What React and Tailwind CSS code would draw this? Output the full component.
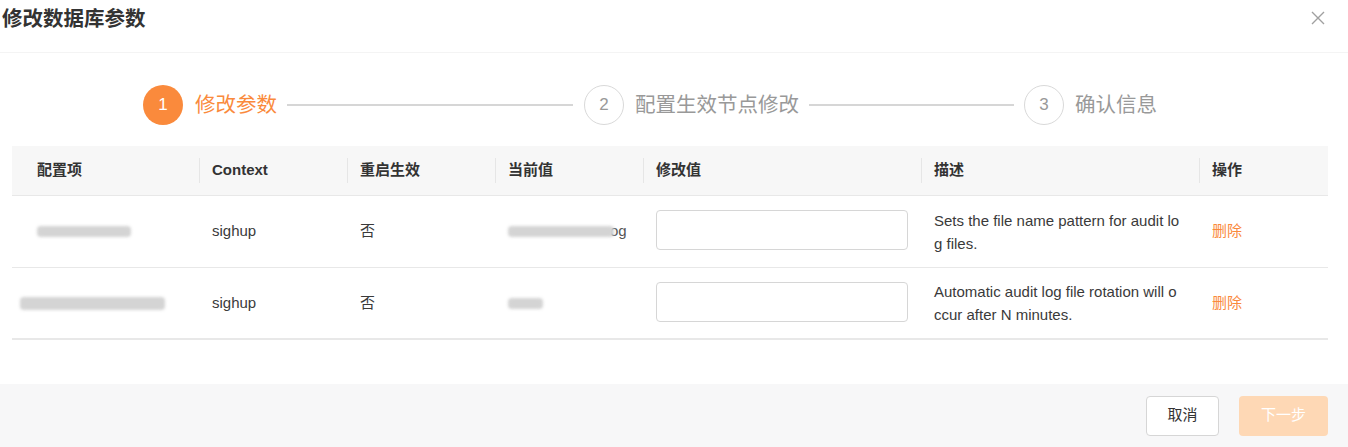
import React from "react";

const FONT = { fontFamily: '"Liberation Sans", "Noto Sans CJK SC", sans-serif' };

function Blur({ w, className = "" }) {
  return <div className={"h-[11px] bg-[#d4d4d4] blur-[1.5px] rounded-sm " + className} style={{ width: w }} />;
}

const rows = [
  {
    name: <div className="flex items-center"><Blur w={94} /></div>,
    cur: (
      <div className="flex items-center">
        <Blur w={106} />
        <span className="text-[15px] text-[#555] ml-[-4px]">og</span>
      </div>
    ),
    desc: "Sets the file name pattern for audit log files.",
  },
  {
    name: <div className="flex items-center ml-[-17px]"><Blur w={145} className="h-[13px]" /></div>,
    cur: <Blur w={35} />,
    desc: "Automatic audit log file rotation will occur after N minutes.",
  },
];

const cols = [
  { w: "w-[187px]", pl: "pl-[25px]" },
  { w: "w-[148px]", pl: "pl-[13px]" },
  { w: "w-[148px]", pl: "pl-[13px]" },
  { w: "w-[148px]", pl: "pl-[13px]" },
  { w: "w-[278px]", pl: "pl-[13px]" },
  { w: "w-[278px]", pl: "pl-[13px]" },
  { w: "w-[129px]", pl: "pl-[13px]" },
];

export default function App() {
  const heads = ["配置项", "Context", "重启生效", "当前值", "修改值", "描述", "操作"];
  return (
    <div className="w-[1348px] h-[447px] bg-white text-[#333] flex flex-col" style={FONT}>
      {/* header */}
      <div className="h-[53px] flex items-start justify-between border-b border-[#f4f4f4] shrink-0">
        <div className="pl-[2px] pt-[5px] text-[20.5px] font-bold text-[#333] leading-[28px]">修改数据库参数</div>
        <svg className="mt-[11px] mr-[23px]" width="14" height="14" viewBox="0 0 14 14">
          <path d="M1 1L13 13M13 1L1 13" stroke="#a0a0a0" strokeWidth="1.4" />
        </svg>
      </div>

      {/* steps */}
      <div className="h-[93px] shrink-0 flex items-start pt-[32px] pl-[143px]">
        <div className="w-[40px] h-[40px] rounded-full bg-[#fa8a3c] text-white flex items-center justify-center text-[17px]">1</div>
        <div className="ml-[12px] text-[20.5px] leading-[40px] text-[#fa8a3c]">修改参数</div>
        <div className="ml-[10px] mt-[19px] w-[286px] h-[2px] bg-[#d6d6d6]" />
        <div className="ml-[11px] w-[40px] h-[40px] rounded-full border border-[#d9d9d9] text-[#999] flex items-center justify-center text-[17px]">2</div>
        <div className="ml-[11px] text-[20.5px] leading-[40px] text-[#999]">配置生效节点修改</div>
        <div className="ml-[10px] mt-[19px] w-[205px] h-[2px] bg-[#d6d6d6]" />
        <div className="ml-[10px] w-[40px] h-[40px] rounded-full border border-[#d9d9d9] text-[#999] flex items-center justify-center text-[17px]">3</div>
        <div className="ml-[11px] text-[20.5px] leading-[40px] text-[#999]">确认信息</div>
      </div>

      {/* table */}
      <div className="ml-[12px] w-[1316px] shrink-0">
        <div className="flex h-[50px] bg-[#f7f7f7] border-b border-[#e8e8e8]">
          {heads.map((h, i) => (
            <div key={h} className={`${cols[i].w} ${cols[i].pl} flex items-center relative text-[15px] font-bold text-[#333]`}>
              {i > 0 && <div className="absolute left-0 top-[12px] h-[25px] w-px bg-[#e6e6e6]" />}
              {h}
            </div>
          ))}
        </div>
        {rows.map((r, idx) => (
          <div key={idx} className={`flex h-[72px] items-center ${idx === rows.length - 1 ? "border-b-2" : "border-b"} border-[#e8e8e8]`}>
            <div className={`${cols[0].w} ${cols[0].pl}`}>{r.name}</div>
            <div className={`${cols[1].w} ${cols[1].pl} text-[15px] text-[#3a3a3a]`}>sighup</div>
            <div className={`${cols[2].w} ${cols[2].pl} text-[15px] text-[#3a3a3a]`}>否</div>
            <div className={`${cols[3].w} ${cols[3].pl}`}>{r.cur}</div>
            <div className={`${cols[4].w} ${cols[4].pl} mb-[3px]`}>
              <input className="w-[252px] h-[40px] border border-[#d6d6d6] rounded-[4px] outline-none px-2" />
            </div>
            <div className={`${cols[5].w} ${cols[5].pl} pr-[17px] text-[15px] leading-[23px] text-[#3a3a3a] break-all`}>{r.desc}</div>
            <div className={`${cols[6].w} ${cols[6].pl} text-[15px] text-[#fa8a3c]`}>删除</div>
          </div>
        ))}
      </div>

      <div className="flex-1" />

      {/* footer */}
      <div className="h-[63px] bg-[#f7f7f8] flex items-center justify-end pr-[20px] gap-[20px] shrink-0">
        <button className="w-[73px] h-[40px] bg-white border border-[#d6d6d6] rounded-[4px] text-[15px] text-[#333]">取消</button>
        <button className="w-[89px] h-[40px] bg-[#fed8b5] rounded-[4px] text-[15px] text-white">下一步</button>
      </div>
    </div>
  );
}
